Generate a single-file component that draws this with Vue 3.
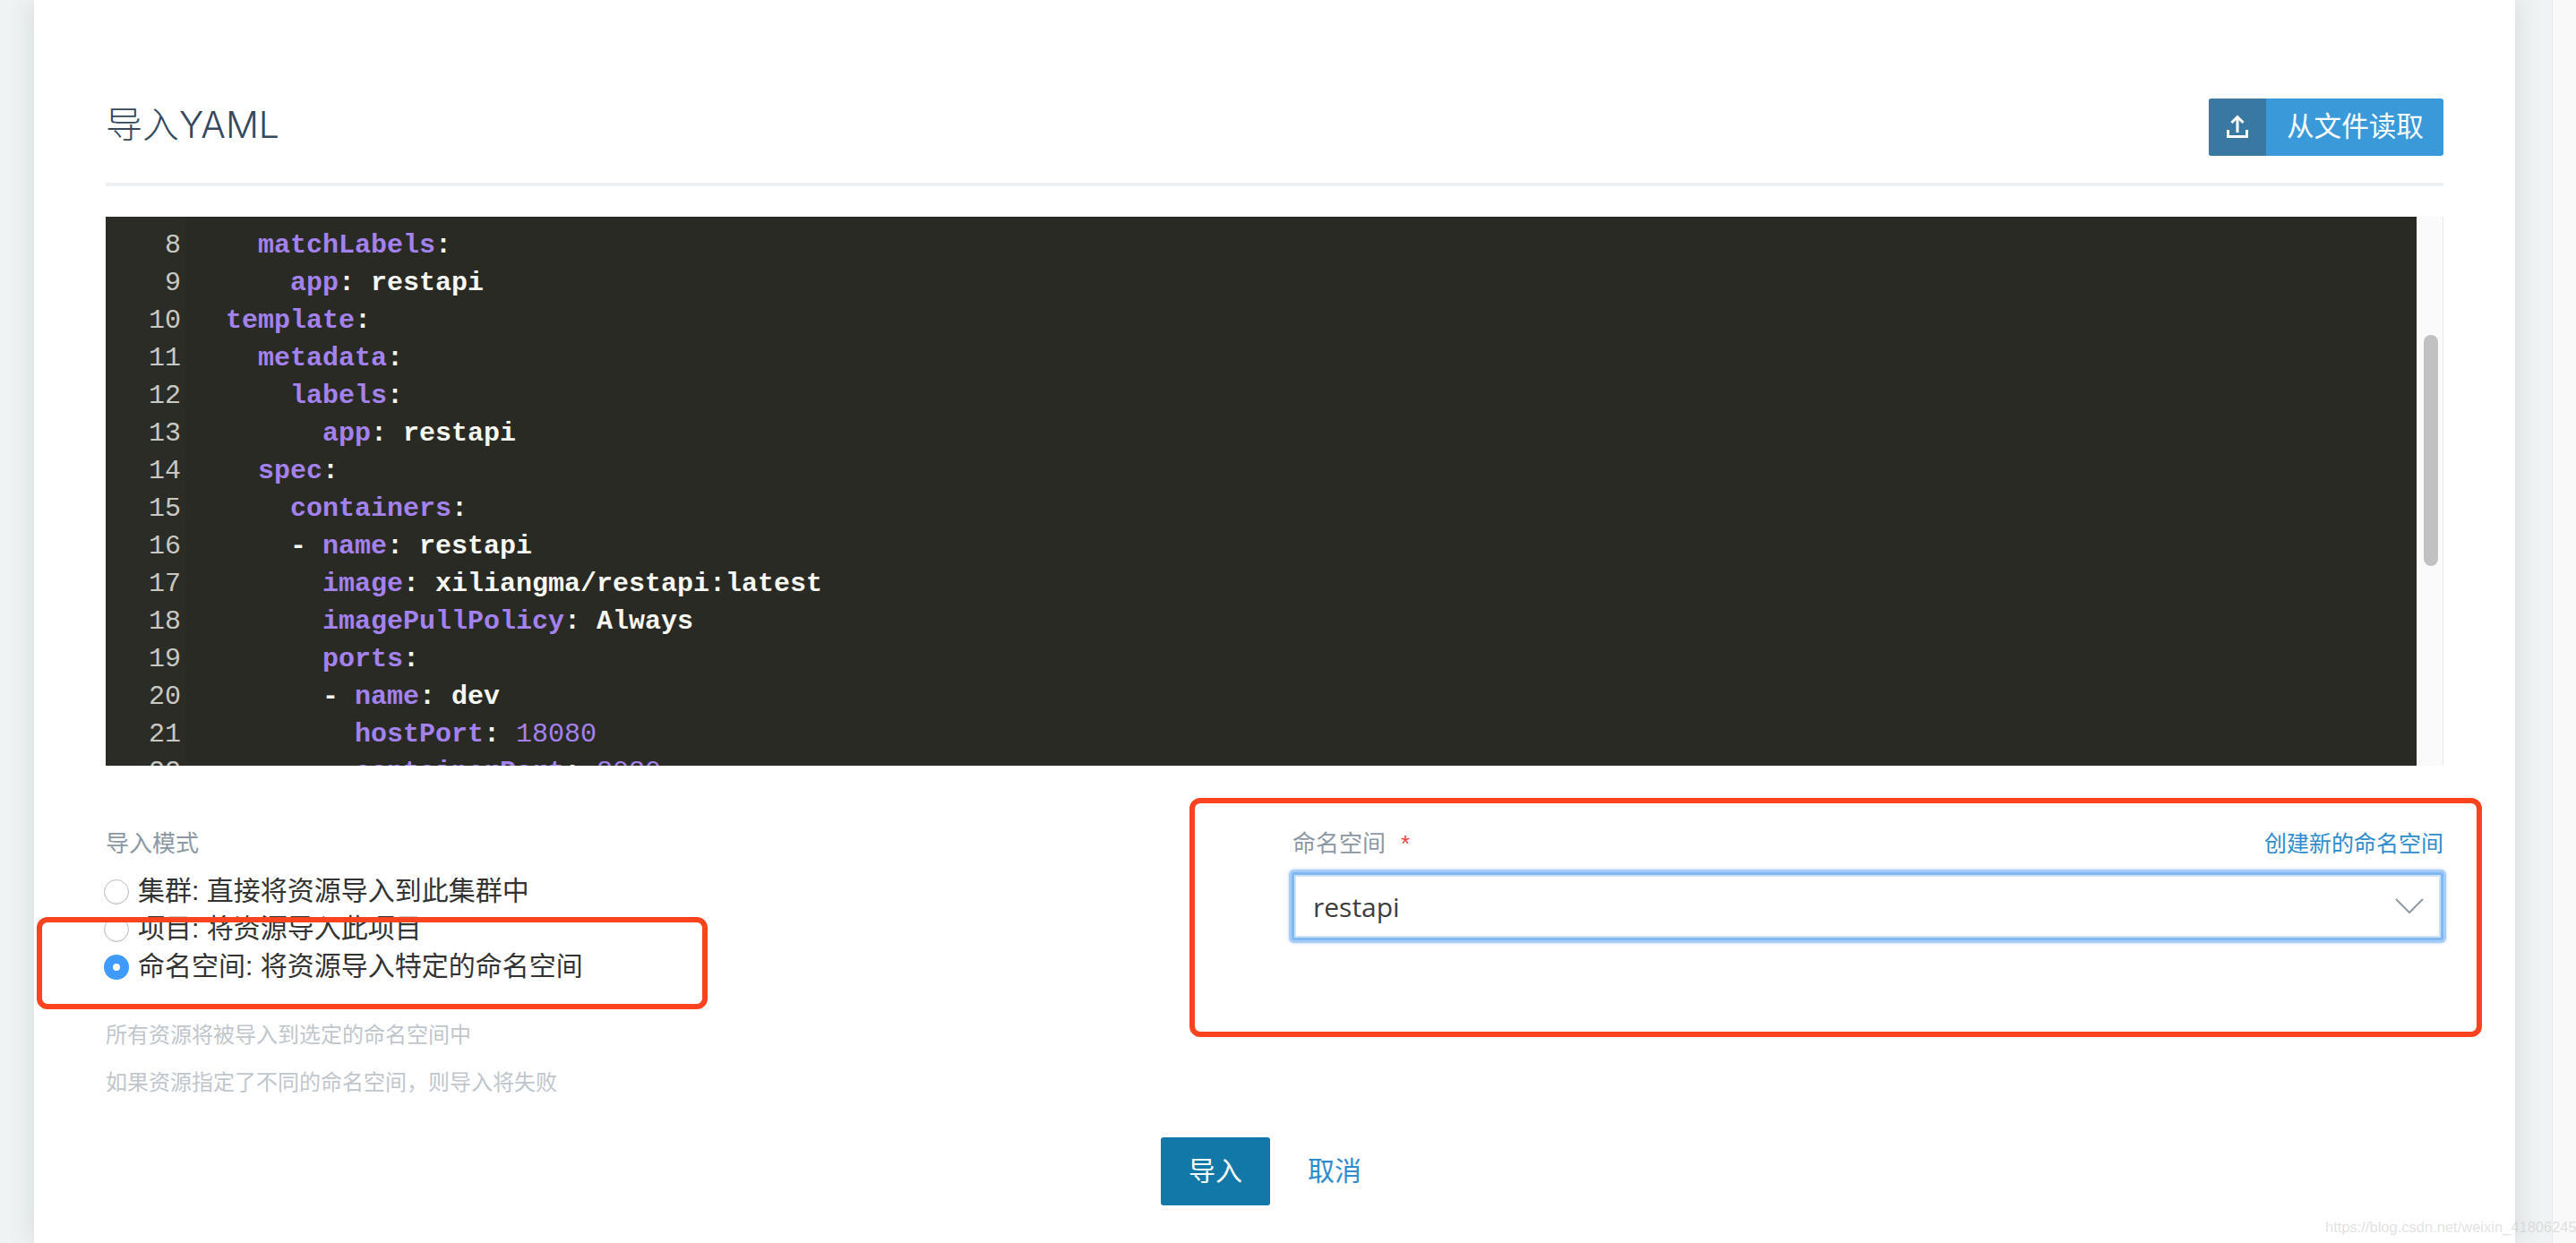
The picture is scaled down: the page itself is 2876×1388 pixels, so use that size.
<script setup>
const k = 'k', v = 'v', n = 'n', p = 'p'
const lines = [
  { no: 8, parts: [[p, '    '], [k, 'matchLabels'], [v, ':']] },
  { no: 9, parts: [[p, '      '], [k, 'app'], [v, ': restapi']] },
  { no: 10, parts: [[p, '  '], [k, 'template'], [v, ':']] },
  { no: 11, parts: [[p, '    '], [k, 'metadata'], [v, ':']] },
  { no: 12, parts: [[p, '      '], [k, 'labels'], [v, ':']] },
  { no: 13, parts: [[p, '        '], [k, 'app'], [v, ': restapi']] },
  { no: 14, parts: [[p, '    '], [k, 'spec'], [v, ':']] },
  { no: 15, parts: [[p, '      '], [k, 'containers'], [v, ':']] },
  { no: 16, parts: [[p, '      '], [v, '- '], [k, 'name'], [v, ': restapi']] },
  { no: 17, parts: [[p, '        '], [k, 'image'], [v, ': xiliangma/restapi:latest']] },
  { no: 18, parts: [[p, '        '], [k, 'imagePullPolicy'], [v, ': Always']] },
  { no: 19, parts: [[p, '        '], [k, 'ports'], [v, ':']] },
  { no: 20, parts: [[p, '        '], [v, '- '], [k, 'name'], [v, ': dev']] },
  { no: 21, parts: [[p, '          '], [k, 'hostPort'], [v, ': '], [n, '18080']] },
  { no: 22, parts: [[p, '          '], [k, 'containerPort'], [v, ': '], [n, '8080']] }
]
const modes = [
  { label: '集群: 直接将资源导入到此集群中', on: false },
  { label: '项目: 将资源导入此项目', on: false },
  { label: '命名空间: 将资源导入特定的命名空间', on: true }
]
</script>

<template>
  <div class="page">
    <div class="backdrop">
      <main class="card">
        <header class="head">
          <h1 class="title">导入YAML</h1>
          <button class="read-btn">
            <span class="read-icon">
              <svg width="24" height="26" viewBox="0 0 24 26" fill="none" stroke="#fff" stroke-width="3">
                <path d="M12 20V3" />
                <path d="M5.5 9 12 2.5 18.5 9" />
                <path d="M1.5 17v7.5h21V17" />
              </svg>
            </span>
            <span class="read-text">从文件读取</span>
          </button>
        </header>

        <section class="editor">
          <div class="code">
            <div v-for="line in lines" :key="line.no" class="line">
              <span class="gutter">{{ line.no }}</span>
              <span class="content"><span v-for="(part, i) in line.parts" :key="i" :class="part[0]">{{ part[1] }}</span></span>
            </div>
          </div>
          <div class="track"><div class="thumb"></div></div>
        </section>

        <section class="form">
          <div class="col-left">
            <div class="label">导入模式</div>
            <div class="radios">
              <div v-for="m in modes" :key="m.label" class="radio-row">
                <span class="radio" :class="{ on: m.on }"></span>
                <span>{{ m.label }}</span>
              </div>
            </div>
            <p class="help first">所有资源将被导入到选定的命名空间中</p>
            <p class="help">如果资源指定了不同的命名空间，则导入将失败</p>
          </div>
          <div class="col-right">
            <div class="label-row">
              <div class="label">命名空间<span class="req">*</span></div>
              <a class="link">创建新的命名空间</a>
            </div>
            <div class="select">
              <span>restapi</span>
              <svg width="32" height="18" viewBox="0 0 32 18" fill="none" stroke="#8f9aa3" stroke-width="2">
                <path d="M1 1l15 15L31 1" />
              </svg>
            </div>
          </div>
        </section>

        <footer class="actions">
          <button class="primary">导入</button>
          <button class="cancel">取消</button>
        </footer>
      </main>
    </div>
    <div class="red-box box-a"></div>
    <div class="red-box box-b"></div>
    <div class="mark">https://blog.csdn.net/weixin_41806245</div>
  </div>
</template>

<style scoped>
.page {
  position: relative;
  width: 2876px;
  height: 1388px;
  overflow: hidden;
  background: #f9f9f9;
  font-family: "Liberation Sans", "Noto Sans CJK SC", sans-serif;
}
.backdrop {
  width: 2850px;
  height: 1388px;
  box-sizing: border-box;
  padding: 0 41px 0 38px;
  background: #f0f3f4;
  border-right: 1px solid #e6e8e9;
}
.card {
  height: 1388px;
  box-sizing: border-box;
  padding: 110px 80px 0;
  background: #fff;
  box-shadow: 0 0 28px rgba(60, 80, 90, 0.16);
}
.head {
  display: flex;
  justify-content: space-between;
  align-items: flex-start;
  height: 98px;
  box-sizing: border-box;
  border-bottom: 4px solid #eceff1;
}
.title {
  margin: 0;
  font-size: 41px;
  font-weight: 300;
  line-height: 58px;
  color: #34495e;
  font-family: "Inter", "Noto Sans CJK SC", sans-serif;
}
.read-btn {
  display: flex;
  width: 262px;
  height: 64px;
  padding: 0;
  border: 0;
  border-radius: 3px;
  overflow: hidden;
  background: #3a9ad9;
  color: #fff;
  font: inherit;
}
.read-icon {
  display: flex;
  align-items: center;
  justify-content: center;
  width: 64px;
  height: 64px;
  padding-bottom: 2px;
  box-sizing: border-box;
  background: #3878a3;
}
.read-text {
  padding-left: 23px;
  font-size: 30.6px;
  line-height: 62px;
}
.editor {
  display: flex;
  height: 613px;
  margin-top: 34px;
  overflow: hidden;
}
.code {
  flex: 1;
  padding-top: 11px;
  background: linear-gradient(90deg, #2c2c27 89px, #2a2a25 89px);
  font-family: "Liberation Mono", monospace;
  font-size: 30px;
  line-height: 42px;
  overflow: hidden;
}
.line {
  display: flex;
  white-space: pre;
}
.gutter {
  width: 89px;
  margin-right: 9px;
  padding-right: 5px;
  box-sizing: border-box;
  text-align: right;
  color: #c9c9c4;
}
.content {
  font-weight: 700;
}
.k, .n {
  color: #a482ee;
}
.n {
  font-weight: 400;
}
.v {
  color: #f8f8f2;
}
.track {
  position: relative;
  width: 30px;
  background: #fafafa;
  border-left: 1px solid #eeeeee;
  border-right: 1px solid #e8e8e8;
  box-sizing: border-box;
}
.thumb {
  position: absolute;
  top: 132px;
  left: 7px;
  width: 16px;
  height: 258px;
  border-radius: 8px;
  background: #c1c1c1;
}
.form {
  display: grid;
  grid-template-columns: 1324px 1286px;
  margin-top: 69px;
}
.label {
  font-size: 26px;
  line-height: 36px;
  color: #8b98a3;
}
.req {
  margin-left: 17px;
  color: #ee4444;
}
.radios {
  margin-top: 11px;
  margin-left: -2px;
}
.radio-row {
  display: flex;
  align-items: center;
  gap: 10px;
  height: 42px;
  font-size: 30px;
  color: #333;
}
.radio {
  width: 28px;
  height: 28px;
  box-sizing: border-box;
  border-radius: 50%;
  background: #fff;
  border: 1px solid #bdbdbd;
  box-shadow: inset 0 -1px 2px rgba(0, 0, 0, 0.1);
  margin-top: 8px;
}
.radio.on {
  border: 10px solid #3f9bff;
  box-shadow: none;
}
.help {
  margin: 17px 0 0;
  font-size: 24px;
  line-height: 36px;
  color: #bfc6cc;
}
.help.first {
  margin-top: 41px;
}
.label-row {
  display: flex;
  justify-content: space-between;
  align-items: center;
  padding-left: 1px;
}
.link {
  font-size: 25px;
  line-height: 36px;
  color: #2f8ccc;
}
.select {
  display: flex;
  align-items: center;
  justify-content: space-between;
  height: 76px;
  margin-top: 14px;
  padding: 0 19px 0 21px;
  box-sizing: border-box;
  background: #fff;
  border: 3px solid #80b8f5;
  border-radius: 3px;
  box-shadow: inset 0 0 0 2px #cfe2fb, 0 0 0 3px #a8ccf8, 0 0 3px 4px #d5e6fb;
  font-family: "Open Sans", sans-serif;
  font-size: 30px;
  color: #3d3d3d;
}
.actions {
  display: flex;
  justify-content: center;
  gap: 12px;
  margin-top: 43px;
}
.primary {
  width: 122px;
  height: 76px;
  padding: 0 0 6px;
  border: 0;
  border-radius: 3px;
  background: #1178a8;
  color: #fff;
  font: inherit;
  font-size: 30px;
}
.cancel {
  height: 76px;
  padding: 0 30px 6px;
  border: 0;
  background: none;
  color: #2f8ccc;
  font: inherit;
  font-size: 30px;
}
.red-box {
  position: absolute;
  box-sizing: border-box;
  border: 6px solid #fb431f;
  border-radius: 12px;
}
.box-a {
  left: 41px;
  top: 1024px;
  width: 749px;
  height: 103px;
}
.box-b {
  left: 1328px;
  top: 891px;
  width: 1443px;
  height: 267px;
}
.mark {
  position: absolute;
  left: 2596px;
  top: 1358px;
  font-family: "Liberation Sans", sans-serif;
  font-size: 16.5px;
  line-height: 24px;
  white-space: nowrap;
  color: rgba(190, 190, 190, 0.45);
}
</style>

<style>
body { margin: 0; }
</style>
